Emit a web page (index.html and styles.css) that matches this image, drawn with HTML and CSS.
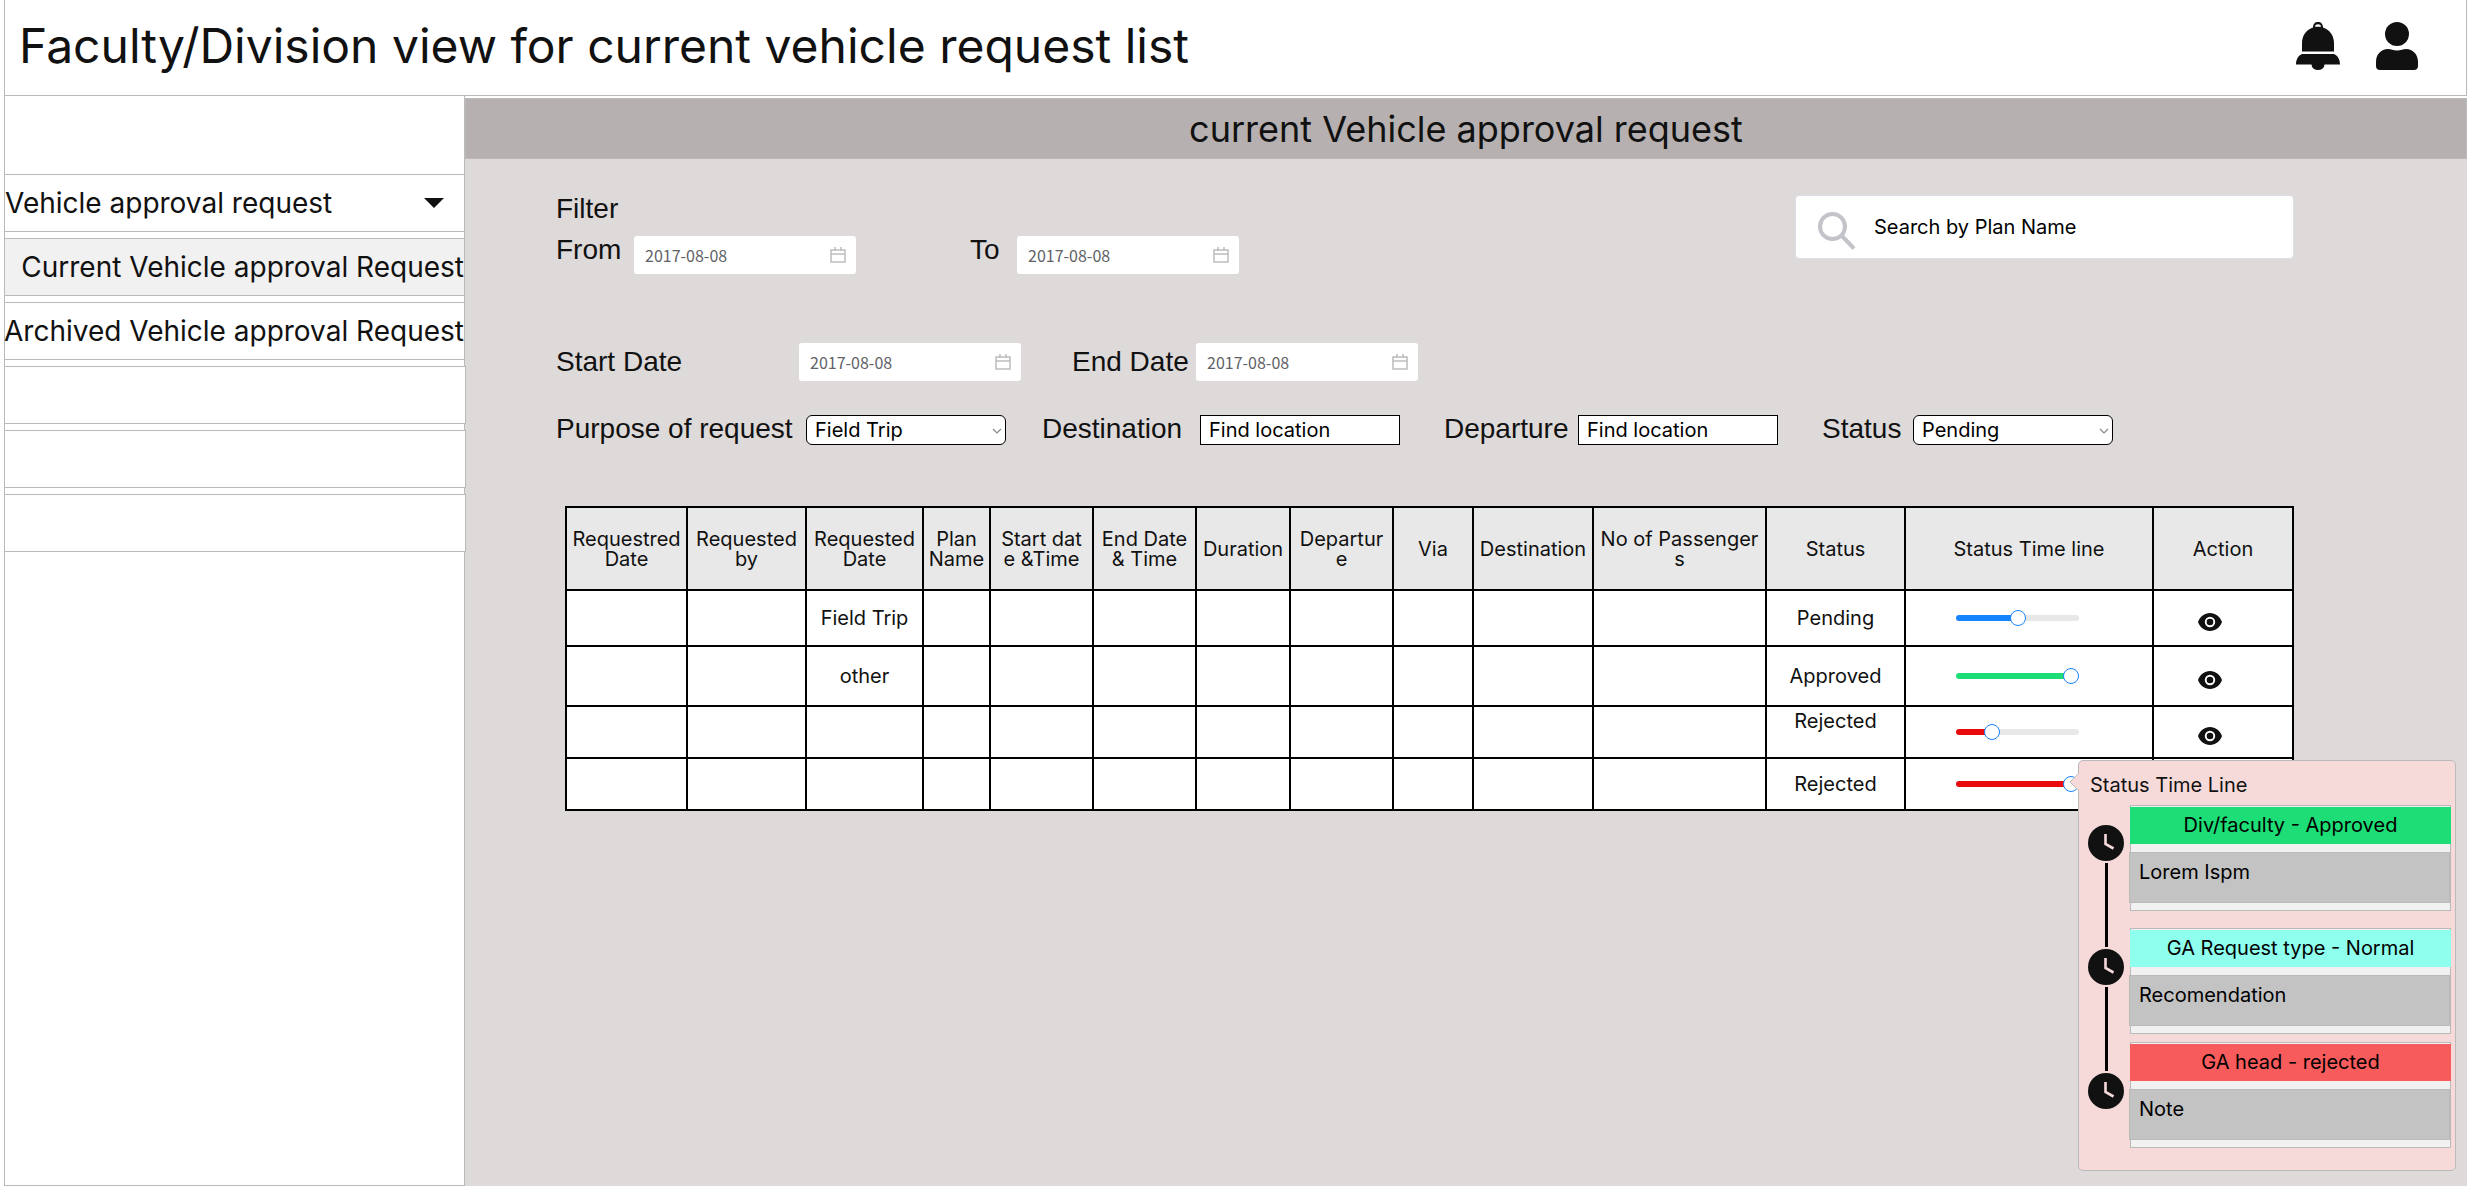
FILE: index.html
```html
<!DOCTYPE html>
<html lang="en">
<head>
<meta charset="utf-8">
<title>Vehicle approval request</title>
<link rel="stylesheet" href="styles.css">
</head>
<body>
<svg class="sprite" aria-hidden="true">
  <symbol id="calendar" viewBox="0 0 16 16"><path d="M1 3h14v12H1zM1 7h14M5 0v4M11 0v4" fill="none" stroke="#bdbdbd" stroke-width="1.500"/></symbol>
  <symbol id="chevron" viewBox="0 0 10 6"><path d="M1 1l4 4 4-4" fill="none" stroke="#888" stroke-width="1.200"/></symbol>
  <symbol id="eye" viewBox="0 0 24 18"><path fill="#111" fill-rule="evenodd" d="M12 0C6.500 0 2 3.600 0 9c2 5.400 6.500 9 12 9s10-3.600 12-9C22 3.600 17.500 0 12 0zm0 3.800a5.200 5.200 0 1 1 0 10.400 5.200 5.200 0 0 1 0-10.400z"/><circle cx="12" cy="9" r="3.300" fill="#111"/></symbol>
  <symbol id="clock" viewBox="0 0 36 36"><circle cx="18" cy="18" r="18" fill="#111"/><path d="M17.500 9v10l8 4.500" fill="none" stroke="#f6d9d9" stroke-width="2.600"/></symbol>
</svg>

<header class="topbar">
  <h1 class="topbar-title">Faculty/Division view for current vehicle request list</h1>
  <div class="topbar-actions">
    <button class="icon-button" type="button" aria-label="Notifications">
      <svg width="44" height="48" viewBox="0 0 44 48" fill="#111"><path fill-rule="evenodd" d="M6 29.500V21C6 13.500 10.500 7.500 17 5.500 17 2 19 0 22 0s5 2 5 5.500c6.500 2 11 8 11 15.500v8.500zM19 4.700h6C24.800 3 23.600 2.300 22 2.300S19.200 3 19 4.700z"/><path d="M6 32h32c3.500 1.500 6 5 6 10.500H28.500a6.500 5.500 0 0 1-13 0H0C0 37 2.500 33.500 6 32z"/></svg>
    </button>
    <button class="icon-button" type="button" aria-label="Account">
      <svg width="42" height="48" viewBox="0 0 42 48" fill="#111"><circle cx="21" cy="12" r="12"/><path d="M12 27c3 0 5 1.500 9 1.500s6-1.500 9-1.500c7 0 12 5.500 12 13v4c0 2.500-1.500 4-4 4H4c-2.500 0-4-1.500-4-4v-4c0-7.500 5-13 12-13z"/></svg>
    </button>
  </div>
</header>

<div class="shell">
  <nav class="sidebar">
    <button class="nav-item nav-toggle" type="button" aria-expanded="true">Vehicle approval request
      <svg width="20" height="10" viewBox="0 0 20 10"><path d="M0 0h20L10 10z" fill="#111"/></svg>
    </button>
    <a class="nav-item nav-sub nav-current" href="#current">Current Vehicle approval Request</a>
    <a class="nav-item nav-sub" href="#archived">Archived Vehicle approval Request</a>
    <div class="nav-item nav-empty"></div>
    <div class="nav-item nav-empty"></div>
    <div class="nav-item nav-empty"></div>
  </nav>

  <main class="main">
    <h2 class="banner">current Vehicle approval request</h2>
    <div class="content">
      <div class="filter-top">
        <div>
          <h3 class="filter-title">Filter</h3>
          <div class="filter-row row-range">
            <label for="from">From</label>
            <span class="date-box"><input id="from" type="text" value="2017-08-08"><svg width="16" height="16"><use href="#calendar"/></svg></span>
            <label for="to">To</label>
            <span class="date-box"><input id="to" type="text" value="2017-08-08"><svg width="16" height="16"><use href="#calendar"/></svg></span>
          </div>
        </div>
        <div class="search">
          <svg width="38" height="38" viewBox="0 0 38 38" fill="none" stroke="#c2c4c9" stroke-width="4"><circle cx="14.500" cy="14.500" r="12.500"/><path d="M23.500 23.500L36 36.500"/></svg>
          <input type="search" aria-label="Search by Plan Name" placeholder="Search by Plan Name">
        </div>
      </div>

      <div class="filter-row row-dates">
        <label for="start">Start Date</label>
        <span class="date-box"><input id="start" type="text" value="2017-08-08"><svg width="16" height="16"><use href="#calendar"/></svg></span>
        <label for="end">End Date</label>
        <span class="date-box"><input id="end" type="text" value="2017-08-08"><svg width="16" height="16"><use href="#calendar"/></svg></span>
      </div>

      <div class="filter-row row-details">
        <label for="purpose">Purpose of request</label>
        <span class="select-box"><select id="purpose"><option>Field Trip</option></select><svg width="10" height="6"><use href="#chevron"/></svg></span>
        <label for="destination">Destination</label>
        <input class="text-box" id="destination" type="text" placeholder="Find location">
        <label for="departure">Departure</label>
        <input class="text-box" id="departure" type="text" placeholder="Find location">
        <label for="status">Status</label>
        <span class="select-box"><select id="status"><option>Pending</option></select><svg width="10" height="6"><use href="#chevron"/></svg></span>
      </div>

      <div class="table-area">
        <table class="requests">
          <colgroup>
            <col class="w121"><col class="w119"><col class="w117"><col class="w67"><col class="w103"><col class="w103"><col class="w94"><col class="w103"><col class="w80"><col class="w120"><col class="w173"><col class="w139"><col class="w248"><col class="w140">
          </colgroup>
          <thead>
            <tr><th>Requestred<br>Date</th><th>Requested<br>by</th><th>Requested<br>Date</th><th>Plan<br>Name</th><th>Start dat<br>e &amp;Time</th><th>End Date<br>&amp; Time</th><th>Duration</th><th>Departur<br>e</th><th>Via</th><th>Destination</th><th>No of Passenger<br>s</th><th>Status</th><th>Status Time line</th><th>Action</th></tr>
          </thead>
          <tbody>
            <tr class="row-56"><td></td><td></td><td>Field Trip</td><td></td><td></td><td></td><td></td><td></td><td></td><td></td><td></td><td>Pending</td>
              <td class="cell-progress"><input class="progress blue" type="range" aria-label="Progress" value="50" style="--value:50%"></td>
              <td class="cell-action"><button class="icon-button" type="button" aria-label="View"><svg width="24" height="18"><use href="#eye"/></svg></button></td></tr>
            <tr class="row-60"><td></td><td></td><td>other</td><td></td><td></td><td></td><td></td><td></td><td></td><td></td><td></td><td>Approved</td>
              <td class="cell-progress"><input class="progress green" type="range" aria-label="Progress" value="100" style="--value:94%"></td>
              <td class="cell-action"><button class="icon-button" type="button" aria-label="View"><svg width="24" height="18"><use href="#eye"/></svg></button></td></tr>
            <tr class="row-52"><td></td><td></td><td></td><td></td><td></td><td></td><td></td><td></td><td></td><td></td><td></td><td class="cell-top">Rejected</td>
              <td class="cell-progress"><input class="progress red" type="range" aria-label="Progress" value="26" style="--value:29%"></td>
              <td class="cell-action"><button class="icon-button" type="button" aria-label="View"><svg width="24" height="18"><use href="#eye"/></svg></button></td></tr>
            <tr class="row-52"><td></td><td></td><td></td><td></td><td></td><td></td><td></td><td></td><td></td><td></td><td></td><td>Rejected</td>
              <td class="cell-progress"><input class="progress red" type="range" aria-label="Progress" value="100" style="--value:94%"></td>
              <td></td></tr>
          </tbody>
        </table>

        <section class="popover">
          <svg class="popover-arrow" width="10" height="20" viewBox="0 0 10 20"><path d="M10 1L1 10l9 9" fill="#f6d9d9" stroke="#bababa"/></svg>
          <h3 class="popover-title">Status Time Line</h3>
          <div class="timeline">
            <div class="rail">
              <svg width="36" height="36"><use href="#clock"/></svg>
              <span class="rail-line"></span>
              <svg width="36" height="36"><use href="#clock"/></svg>
              <span class="rail-line"></span>
              <svg width="36" height="36"><use href="#clock"/></svg>
            </div>
            <div class="steps">
              <article class="step step-division"><h4 class="step-head green-bg">Div/faculty - Approved</h4><p class="step-note">Lorem Ispm</p></article>
              <article class="step"><h4 class="step-head cyan-bg">GA Request type - Normal</h4><p class="step-note">Recomendation</p></article>
              <article class="step"><h4 class="step-head red-bg">GA head - rejected</h4><p class="step-note">Note</p></article>
            </div>
          </div>
        </section>
      </div>
    </div>
  </main>
</div>
</body>
</html>
```
FILE: styles.css
```css
* { box-sizing: border-box; }
body {
  margin: 0;
  padding: 0 5px 0 4px;
  min-height: 100vh;
  display: flex;
  flex-direction: column;
  background: #fff;
  color: #111;
  font: 20px/20px Inter, sans-serif;
}
h1, h2, h3, h4, p { margin: 0; font-weight: 400; }
svg { display: block; flex: none; }
input, select, button { font: inherit; color: inherit; margin: 0; }
.sprite { position: absolute; width: 0; height: 0; }
.icon-button { padding: 0; border: 0; background: none; cursor: pointer; }

.topbar {
  display: flex;
  align-items: center;
  justify-content: space-between;
  height: 96px;
  padding: 0 48px 4px 14px;
  border: 1px solid #bababa;
  border-top: 0;
}
.topbar-title { font-size: 48px; line-height: 60px; }
.topbar-actions { display: flex; gap: 36px; }

.shell { display: flex; flex: 1; }
.sidebar {
  flex: none;
  width: 461px;
  padding-top: 78px;
  display: flex;
  flex-direction: column;
  gap: 6px;
  border: 1px solid #bababa;
  border-top: 0;
}
.nav-item {
  display: flex;
  align-items: center;
  height: 58px;
  padding: 0;
  border: 0 solid #bababa;
  border-width: 1px 0;
  background: #fff;
  color: #111;
  font-size: 28px;
  line-height: 34px;
  text-decoration: none;
  white-space: nowrap;
}
.nav-toggle { justify-content: space-between; padding-right: 20px; }
.nav-sub { justify-content: flex-end; }
.nav-current { background: #f1f1f1; }
.nav-empty { position: relative; margin-right: -2px; border-right-width: 1px; }

.main { flex: 1; min-width: 0; margin-top: 2px; background: #dedad9; }
.banner {
  height: 61px;
  border: 1px solid #bababa;
  background: #b6b0b0;
  font-size: 36px;
  line-height: 60px;
  text-align: center;
}
.content { padding: 36px 173px 40px 91px; }

.filter-top { display: flex; justify-content: space-between; margin-bottom: 69px; }
.filter-title, .filter-row label { font: 28px/28px "Liberation Sans", Arial, sans-serif; white-space: nowrap; }
.filter-title { margin-bottom: 13px; }
.filter-row { display: grid; align-items: start; }
.row-range { grid-template-columns: 78px 336px 47px 222px; }
.row-dates { grid-template-columns: 243px 273px 124px 222px; align-items: center; margin-bottom: 34px; }
.row-details { grid-template-columns: 250px 236px 158px 244px 134px 244px 91px 200px; margin-bottom: 61px; }

.date-box {
  display: flex;
  align-items: center;
  width: 222px;
  height: 38px;
  padding: 0 10px 0 11px;
  border-radius: 3px;
  background: #fff;
}
.date-box input {
  flex: 1;
  min-width: 0;
  padding: 0;
  border: 0;
  background: none;
  color: #606266;
  font: 16px/24px "Noto Sans CJK SC", sans-serif;
}
.search {
  display: flex;
  align-items: center;
  gap: 18px;
  width: 499px;
  height: 64px;
  padding: 0 22px;
  border: 1px solid #dcdfe6;
  border-radius: 4px;
  background: #fff;
}
.search svg { margin-top: 8px; }
.search input { flex: 1; min-width: 0; padding: 0; border: 0; background: none; }
input::placeholder { color: #000; opacity: 1; }

.select-box { position: relative; width: 200px; }
.select-box svg { position: absolute; right: 4px; top: 13px; pointer-events: none; }
.select-box select, .text-box {
  display: block;
  width: 200px;
  height: 30px;
  padding: 0 8px;
  border: 1px solid #000;
  border-radius: 0;
  background: #fff;
  color: #000;
  line-height: 28px;
}
.select-box select { appearance: none; border-radius: 6px; }

.table-area { position: relative; margin-left: 9px; }
.requests { width: 100%; table-layout: fixed; border-collapse: collapse; background: #fff; }
.requests th, .requests td { padding: 0; border: 2px solid #000; text-align: center; font-weight: 400; white-space: nowrap; }
.requests th { height: 83px; background: #e8e8e8; }
.w121 { width: 121px; } .w119 { width: 119px; } .w117 { width: 117px; } .w67 { width: 67px; }
.w103 { width: 103px; } .w94 { width: 94px; } .w80 { width: 80px; } .w120 { width: 120px; }
.w173 { width: 173px; } .w139 { width: 139px; } .w248 { width: 248px; } .w140 { width: 140px; }
.row-56 { height: 56px; }
.row-60 { height: 60px; }
.row-52 { height: 52px; }
.requests .cell-top { vertical-align: top; padding-top: 4px; }
.requests .cell-progress { padding-left: 50px; text-align: left; }
.requests .cell-action { padding: 8px 0 0 44px; text-align: left; }
.cell-action .icon-button { display: block; }

.progress {
  --fill: #1684fc;
  display: block;
  appearance: none;
  width: 123px;
  height: 16px;
  margin: 0;
  background: none;
}
.progress.green { --fill: #1dde76; }
.progress.red { --fill: #e90b0b; }
.progress::-webkit-slider-runnable-track {
  height: 6px;
  border-radius: 3px;
  background: linear-gradient(to right, var(--fill) var(--value), #e8e8e8 var(--value));
}
.progress::-webkit-slider-thumb {
  appearance: none;
  width: 16px;
  height: 16px;
  margin-top: -5px;
  border: 1px solid #1684fc;
  border-radius: 50%;
  background: #fff;
}

.popover {
  position: absolute;
  top: 254px;
  right: -162px;
  width: 378px;
  padding: 14px 4px 22px 9px;
  border: 1px solid #bababa;
  border-radius: 5px;
  background: #f6d9d9;
}
.popover-arrow { position: absolute; left: -10px; top: 11px; }
.popover-title { margin: 0 0 10px 2px; font-size: 20px; line-height: 20px; }
.timeline { display: flex; gap: 6px; }
.rail { display: flex; flex-direction: column; align-items: center; gap: 2px; padding-top: 20px; }
.rail-line { width: 3px; height: 84px; background: #000; }
.steps { flex: 1; display: flex; flex-direction: column; gap: 8px; }
.step { height: 106px; padding-top: 1px; border: 1px solid #bababa; background: #f1f1f1; color: #000; }
.step-division { margin-bottom: 9px; }
.step-head { margin: 0 -1px 8px; font-size: 20px; line-height: 37px; text-align: center; }
.step-note { height: 51px; margin-left: -2px; padding: 9px; border: 1px solid #bababa; background: #c3c3c3; }
.green-bg { background: #1dde76; }
.cyan-bg { background: #8fffee; }
.red-bg { background: #f75b5b; }
```
